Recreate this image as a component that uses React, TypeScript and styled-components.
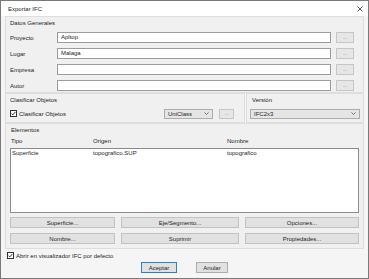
import styled, { createGlobalStyle } from "styled-components";

const GlobalStyle = createGlobalStyle`
  * { box-sizing: border-box; }
  body {
    margin: 0;
    font-family: "Liberation Sans", Arial, sans-serif;
    font-size: 6px;
    color: #1e1e1e;
    background: #ffffff;
  }
`

const Window = styled.div`
  width: 369px;
  height: 279px;
  display: flex;
  flex-direction: column;
  border: 1px solid #7a7a7a;
  background: #f5f5f5;
  overflow: hidden;
`

const TitleBar = styled.div`
  height: 15px;
  flex: none;
  display: flex;
  align-items: center;
  justify-content: space-between;
  padding: 0 5px 0 7px;
  background: #ffffff;
  font-size: 6px;
`

const Body = styled.div`
  display: flex;
  flex-direction: column;
  padding: 0 4px;
`

const Group = styled.div<{ $h: number; $pr?: number }>`
  height: ${(p) => p.$h}px;
  display: flex;
  flex-direction: column;
  padding: 2px ${(p) => p.$pr ?? 4}px 0 4px;
  border: 1px solid #dedede;
  background: #f0f0f0;
`

const GroupLabel = styled.div<{ $ml?: number }>`
  height: 8px;
  line-height: 8px;
  margin-left: ${(p) => p.$ml ?? 0}px;
`

const FieldList = styled.div`
  display: flex;
  flex-direction: column;
  gap: 5px;
  margin-top: 5px;
`

const FieldRow = styled.div`
  display: flex;
  align-items: center;
  height: 11px;
`

const FieldLabel = styled.div`
  width: 47px;
  flex: none;
`

const TextBox = styled.div`
  flex: 1;
  height: 11px;
  line-height: 9px;
  padding-left: 3px;
  background: #ffffff;
  border: 1px solid #9c9c9c;
`

const DotsButton = styled.div<{ $w: number }>`
  width: ${(p) => p.$w}px;
  height: ${(p) => (p.$w > 16 ? 11 : 10)}px;
  flex: none;
  margin-left: 5px;
  display: flex;
  align-items: center;
  justify-content: center;
  background: #e6e6e6;
  border: 1px solid #c6c6c6;
  color: #8a8a8a;
  font-size: 5px;
  line-height: 1;
`

const PairRow = styled.div`
  display: flex;
  gap: 1px;
`

const ControlRow = styled.div`
  display: flex;
  align-items: center;
  height: 11px;
  margin-top: 4px;
`

const CheckWrap = styled.label<{ $ml?: number }>`
  display: flex;
  align-items: center;
  gap: 2px;
  margin-left: ${(p) => p.$ml ?? 0}px;
  flex: 1;
`

const Select = styled.div<{ $w?: number }>`
  ${(p) => (p.$w ? `width: ${p.$w}px; flex: none;` : "flex: 1;")}
  height: 10px;
  display: flex;
  align-items: center;
  justify-content: space-between;
  padding: 0 3px 0 3px;
  background: #e5e5e5;
  border: 1px solid #adadad;
`

const ColumnGrid = styled.div`
  display: grid;
  grid-template-columns: 82px 134px 1fr;
`

const Headers = styled(ColumnGrid)`
  height: 8px;
  line-height: 8px;
  margin-top: 3px;
  padding-left: 1px;
`

const ListBox = styled.div`
  height: 65px;
  margin-top: 3px;
  background: #ffffff;
  border: 1px solid #8c8c8c;
  padding: 0 0 0 1px;
`

const ListRow = styled(ColumnGrid)`
  grid-template-columns: 81px 134px 1fr;
  height: 8px;
  line-height: 8px;
`

const ButtonGrid = styled.div`
  display: grid;
  grid-template-columns: 105px 118px 1fr;
  column-gap: 6px;
  row-gap: 5px;
  margin-top: 4px;
`

const PushButton = styled.div<{ $default?: boolean }>`
  height: 11px;
  display: flex;
  align-items: center;
  justify-content: center;
  background: #e1e1e1;
  border: 1px solid ${(p) => (p.$default ? "#2a7fd4" : "#c2c2c2")};
`

const Footer = styled.div`
  display: flex;
  justify-content: center;
  gap: 19px;
  margin-top: 3px;
`

const FooterButton = styled(PushButton)<{ $w: number }>`
  width: ${(p) => p.$w}px;
  border-color: ${(p) => (p.$default ? "#2a7fd4" : "#adadad")};
`

const Check = () => (
  <svg width="7" height="7" viewBox="0 0 7 7">
    <rect x="0.5" y="0.5" width="6" height="6" fill="#fff" stroke="#333" />
    <path d="M1.5 3.6 L2.8 4.9 L5.5 1.9" fill="none" stroke="#222" strokeWidth="0.9" />
  </svg>
)

const Chevron = () => (
  <svg width="5" height="3" viewBox="0 0 5 3">
    <path d="M0.5 0.5 L2.5 2.5 L4.5 0.5" fill="none" stroke="#555" strokeWidth="0.8" />
  </svg>
)

const CloseIcon = () => (
  <svg width="6" height="6" viewBox="0 0 6 6">
    <path d="M0.5 0.5 L5.5 5.5 M5.5 0.5 L0.5 5.5" stroke="#333" strokeWidth="0.8" />
  </svg>
)

const fields = [
  { label: "Proyecto", value: "Apltop" },
  { label: "Lugar", value: "Malaga" },
  { label: "Empresa", value: "" },
  { label: "Autor", value: "" },
]

const buttons = ["Superficie...", "Eje/Segmento...", "Opciones...", "Nombre...", "Suprimir", "Propiedades..."]

export default function App() {
  return (
    <>
      <GlobalStyle />
      <Window>
        <TitleBar>
          <span>Exportar IFC</span>
          <CloseIcon />
        </TitleBar>
        <Body>
          <Group $h={77} $pr={9}>
            <GroupLabel>Datos Generales</GroupLabel>
            <FieldList>
              {fields.map((f) => (
                <FieldRow key={f.label}>
                  <FieldLabel>{f.label}</FieldLabel>
                  <TextBox>{f.value}</TextBox>
                  <DotsButton $w={18}>...</DotsButton>
                </FieldRow>
              ))}
            </FieldList>
          </Group>

          <PairRow>
            <Group $h={30} $pr={10} style={{ flex: 1 }}>
              <GroupLabel>Clasificar Objetos</GroupLabel>
              <ControlRow>
                <CheckWrap>
                  <Check />
                  Clasificar Objetos
                </CheckWrap>
                <Select $w={49}>
                  UniClass
                  <Chevron />
                </Select>
                <DotsButton $w={15} style={{ marginLeft: 6 }}>...</DotsButton>
              </ControlRow>
            </Group>
            <Group $h={30} $pr={3} style={{ width: 118, paddingLeft: 3 }}>
              <GroupLabel $ml={2}>Versión</GroupLabel>
              <ControlRow>
                <Select>
                  IFC2x3
                  <Chevron />
                </Select>
              </ControlRow>
            </Group>
          </PairRow>

          <Group $h={126}>
            <GroupLabel $ml={1}>Elementos</GroupLabel>
            <Headers>
              <span>Tipo</span>
              <span>Origen</span>
              <span>Nombre</span>
            </Headers>
            <ListBox>
              <ListRow>
                <span>Superficie</span>
                <span>topografico.SUP</span>
                <span>topografico</span>
              </ListRow>
            </ListBox>
            <ButtonGrid>
              {buttons.map((b) => (
                <PushButton key={b}>{b}</PushButton>
              ))}
            </ButtonGrid>
          </Group>

          <CheckWrap $ml={2} style={{ marginTop: 3, height: 7, flex: "none" }}>
            <Check />
            Abrir en visualizador IFC por defecto
          </CheckWrap>

          <Footer>
            <FooterButton $w={36} $default>Aceptar</FooterButton>
            <FooterButton $w={32}>Anular</FooterButton>
          </Footer>
        </Body>
      </Window>
    </>
  )
}
